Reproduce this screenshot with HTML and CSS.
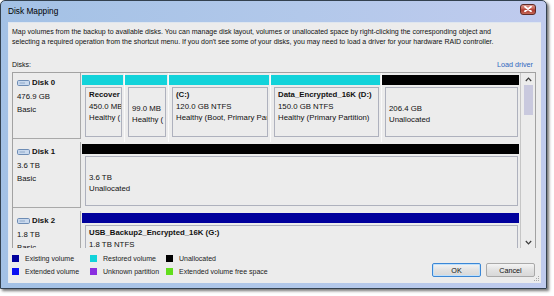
FILE: index.html
```html
<!DOCTYPE html>
<html>
<head>
<meta charset="utf-8">
<title>Disk Mapping</title>
<link rel="stylesheet" href="styles.css">
</head>
<body>
<div class="window">
  <div class="titlebar">
    <span class="title">Disk Mapping</span>
    <span class="close"><svg width="8" height="6" viewBox="0 0 8 6"><path d="M1 0.8 L7 5.2 M7 0.8 L1 5.2" stroke="#fff" stroke-width="1.8" stroke-linecap="round"/></svg></span>
  </div>
  <div class="client">
    <p class="desc">Map volumes from the backup to available disks. You can manage disk layout, volumes or unallocated space by right-clicking the corresponding object and<br>selecting a required operation from the shortcut menu. If you don't see some of your disks, you may need to load a driver for your hardware RAID controller.</p>
    <div class="disks-head"><span>Disks:</span><span class="link">Load driver</span></div>
    <div class="listbox">
      <div class="rows">
        <div class="disk">
          <div class="label">
            <div class="dname"><svg class="hdd" width="13" height="6" viewBox="0 0 13 6"><rect x="0.5" y="0.5" width="12" height="5" rx="1.2" fill="#c9d9ee" stroke="#6d8cb4"/><line x1="2.5" y1="3" x2="8" y2="3" stroke="#8ea8c8"/></svg>Disk 0</div>
            <div>476.9 GB</div>
            <div>Basic</div>
          </div>
          <div class="parts">
            <div class="part" style="width:41px"><div class="bar restored"></div><div class="body"><b>Recover</b><span>450.0 MB</span><span>Healthy (</span></div></div>
            <div class="part" style="width:42px"><div class="bar restored"></div><div class="body noname"><span>99.0 MB</span><span>Healthy (</span></div></div>
            <div class="part" style="width:100px"><div class="bar restored"></div><div class="body"><b>(C:)</b><span>120.0 GB NTFS</span><span>Healthy (Boot, Primary Partition)</span></div></div>
            <div class="part" style="width:109px"><div class="bar restored"></div><div class="body"><b>Data_Encrypted_16K (D:)</b><span>150.0 GB NTFS</span><span>Healthy (Primary Partition)</span></div></div>
            <div class="part" style="width:137px"><div class="bar unalloc"></div><div class="body noname"><span>206.4 GB</span><span>Unallocated</span></div></div>
          </div>
        </div>
        <div class="disk">
          <div class="label">
            <div class="dname"><svg class="hdd" width="13" height="6" viewBox="0 0 13 6"><rect x="0.5" y="0.5" width="12" height="5" rx="1.2" fill="#c9d9ee" stroke="#6d8cb4"/><line x1="2.5" y1="3" x2="8" y2="3" stroke="#8ea8c8"/></svg>Disk 1</div>
            <div>3.6 TB</div>
            <div>Basic</div>
          </div>
          <div class="parts">
            <div class="part" style="width:437px"><div class="bar unalloc"></div><div class="body noname"><span>3.6 TB</span><span>Unallocated</span></div></div>
          </div>
        </div>
        <div class="disk">
          <div class="label">
            <div class="dname"><svg class="hdd" width="13" height="6" viewBox="0 0 13 6"><rect x="0.5" y="0.5" width="12" height="5" rx="1.2" fill="#c9d9ee" stroke="#6d8cb4"/><line x1="2.5" y1="3" x2="8" y2="3" stroke="#8ea8c8"/></svg>Disk 2</div>
            <div>1.8 TB</div>
            <div>Basic</div>
          </div>
          <div class="parts">
            <div class="part" style="width:437px"><div class="bar existing"></div><div class="body"><b>USB_Backup2_Encrypted_16K (G:)</b><span>1.8 TB NTFS</span><span>Healthy (Primary Partition)</span></div></div>
          </div>
        </div>
      </div>
      <div class="vscroll">
        <div class="arrow"><svg width="7" height="5" viewBox="0 0 7 5"><polyline points="0.8,4 3.5,1.2 6.2,4" fill="none" stroke="#3a3a3a" stroke-width="1.2"/></svg></div>
        <div class="thumb"></div>
        <div class="track"></div>
        <div class="arrow"><svg width="7" height="5" viewBox="0 0 7 5"><polyline points="0.8,1 3.5,3.8 6.2,1" fill="none" stroke="#3a3a3a" stroke-width="1.2"/></svg></div>
      </div>
    </div>
    <div class="footer">
      <div class="legend">
        <div class="item"><i class="sw existing"></i>Existing volume</div>
        <div class="item"><i class="sw restored"></i>Restored volume</div>
        <div class="item"><i class="sw unalloc"></i>Unallocated</div>
        <div class="item"><i class="sw extended"></i>Extended volume</div>
        <div class="item"><i class="sw unknown"></i>Unknown partition</div>
        <div class="item"><i class="sw extfree"></i>Extended volume free space</div>
      </div>
      <div class="buttons">
        <button class="btn default">OK</button>
        <button class="btn">Cancel</button>
      </div>
    </div>
    <svg class="grip" width="6" height="6" viewBox="0 0 6 6"><g fill="#a8a8a8"><rect x="4" y="0" width="1" height="1"/><rect x="2" y="2" width="1" height="1"/><rect x="4" y="2" width="1" height="1"/><rect x="0" y="4" width="1" height="1"/><rect x="2" y="4" width="1" height="1"/><rect x="4" y="4" width="1" height="1"/></g></svg>
  </div>
</div>
</body>
</html>
```
FILE: styles.css
```css
* { box-sizing: border-box; }
html, body { margin: 0; padding: 0; }
body {
  background: #ffffff;
  width: 554px;
  height: 296px;
  overflow: hidden;
  font-family: "Liberation Sans", Arial, sans-serif;
  color: #000;
}
.window {
  width: 547px;
  height: 289px;
  border: 1px solid #33414f;
  border-radius: 5px 5px 0 0;
  background: linear-gradient(to right, #a3c1e5 0%, #b2c8ea 55%, #c0cbee 100%);
  padding: 0 5px 5px 7px;
  display: flex;
  flex-direction: column;
  box-shadow: 2px 2px 3px rgba(0, 0, 0, 0.55);
}
.titlebar {
  height: 21px;
  flex: none;
  display: flex;
  align-items: center;
  justify-content: space-between;
}
.title {
  font-size: 8.3px;
  color: #000;
  margin-top: -1px;
}
.close {
  width: 16px;
  height: 11px;
  margin-right: 5px;
  margin-top: -5px;
  border: 1px solid #5e2a26;
  border-radius: 3px;
  background: linear-gradient(#dc9a90 0%, #c55a4d 45%, #a9382e 55%, #c76a57 100%);
  display: flex;
  align-items: center;
  justify-content: center;
}
.close svg { display: block; }
.client {
  flex: 1;
  position: relative;
  background: #ececec;
  border-top: 1px solid #dfe6ef;
  border-left: 1px solid #e4eaf2;
  padding: 4px 5px 0 3px;
  display: flex;
  flex-direction: column;
}
.desc {
  margin: 0;
  font-size: 7px;
  line-height: 9.5px;
  white-space: nowrap;
  color: #111;
}
.disks-head {
  margin-top: 14px;
  height: 10px;
  line-height: 10px;
  font-size: 7px;
  display: flex;
  justify-content: space-between;
  padding-right: 3px;
  color: #111;
}
.link { color: #2f67c0; font-size: 7.2px; }
.listbox {
  margin-top: 2px;
  height: 176px;
  flex: none;
  border: 1px solid #a2a2a2;
  border-bottom: none;
  display: flex;
  overflow: hidden;
  background: #ececec;
}
.rows { flex: 1; overflow: hidden; }
.disk { height: 69px; display: flex; }
.label {
  width: 68px;
  height: 66px;
  flex: none;
  border-right: 1px solid #a9a9a9;
  border-bottom: 1px solid #a9a9a9;
  padding: 3px 0 0 4px;
  font-size: 7.8px;
  line-height: 13.5px;
  color: #111;
}
.dname { font-weight: bold; display: flex; align-items: center; }
.hdd { margin-right: 2px; flex: none; }
.parts {
  margin-left: 1px;
  display: flex;
  gap: 2px;
}
.part {
  display: flex;
  flex-direction: column;
  flex: none;
}
.part + .part { box-shadow: -1px 0 0 #fafafa; }
.bar { height: 10px; margin-top: 2px; }
.restored { background: #12d3da; }
.unalloc { background: #000; }
.existing { background: #00009c; }
.extended { background: #0a10f2; }
.unknown { background: #8a2fe0; }
.extfree { background: #62de1c; }
.body {
  margin: 2px 1px 0 3px;
  height: 50px;
  border: 1px solid #aeb1bd;
  padding: 1px 0 0 3px;
  font-size: 7.8px;
  line-height: 11.5px;
  overflow: hidden;
  white-space: nowrap;
  display: flex;
  flex-direction: column;
  color: #111;
}
.body.noname { padding-top: 14.5px; }
.vscroll {
  width: 15px;
  flex: none;
  border-left: 1px solid #c6c6c6;
  display: flex;
  flex-direction: column;
  align-items: center;
}
.arrow {
  height: 12px;
  display: flex;
  align-items: center;
  justify-content: center;
}
.arrow svg { display: block; }
.thumb {
  width: 9px;
  height: 30px;
  background: #c9c9de;
  margin-left: 1px;
}
.track { flex: 1; }
.footer {
  margin-top: 4px;
  display: flex;
  align-items: flex-start;
}
.legend {
  display: grid;
  grid-template-columns: 78px 76px auto;
  grid-auto-rows: 13px;
  font-size: 7px;
  color: #222;
}
.item { display: flex; align-items: center; white-space: nowrap; }
.sw {
  display: inline-block;
  width: 7px;
  height: 7px;
  margin-right: 6px;
}
.buttons {
  margin-left: auto;
  margin-right: 1px;
  margin-top: 11px;
  display: flex;
  gap: 5px;
}
.btn {
  width: 49px;
  height: 14px;
  padding: 0;
  font-family: "Liberation Sans", Arial, sans-serif;
  font-size: 7.2px;
  color: #111;
  border: 1px solid #a9a9a9;
  border-radius: 2px;
  background: linear-gradient(#f4f4f4, #e2e2e2 50%, #d8d8d8);
}
.btn.default {
  border-color: #3b87d6;
  box-shadow: inset 0 0 0 1px #bfe0fb;
}
.grip {
  position: absolute;
  right: 1px;
  bottom: 1px;
}
```
